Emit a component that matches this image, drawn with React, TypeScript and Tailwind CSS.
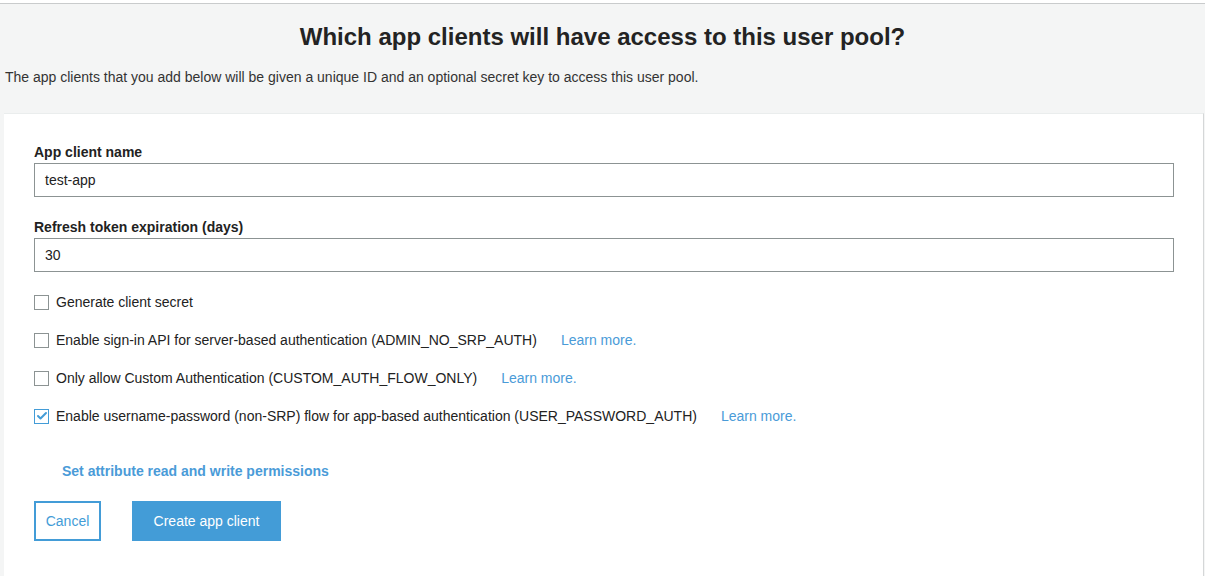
import { Check } from "lucide-react";

const options = [
  { id: 1, label: "Generate client secret", checked: false, learn: false },
  {
    id: 2,
    label: "Enable sign-in API for server-based authentication (ADMIN_NO_SRP_AUTH)",
    checked: false,
    learn: true,
  },
  {
    id: 3,
    label: "Only allow Custom Authentication (CUSTOM_AUTH_FLOW_ONLY)",
    checked: false,
    learn: true,
  },
  {
    id: 4,
    label: "Enable username-password (non-SRP) flow for app-based authentication (USER_PASSWORD_AUTH)",
    checked: true,
    learn: true,
  },
];

export default function App() {
  return (
    <div className="w-[1205px] h-[576px] overflow-hidden bg-[#f4f5f5] font-['Liberation_Sans',Arial,sans-serif] text-[#222]">
      <div className="h-[3px] bg-white" />
      <div className="h-px bg-[#c9cbcc]" />

      {/* Header */}
      <div className="flex flex-col">
        <h1 className="mt-[19px] text-center text-[24px] leading-[28px] font-bold text-[#232323]">
          Which app clients will have access to this user pool?
        </h1>
        <p className="mt-[18px] pl-[5px] text-[14px] leading-[16px] text-[#333]">
          The app clients that you add below will be given a unique ID and an optional secret key to access this user pool.
        </p>
      </div>

      {/* Card */}
      <div className="mt-[28px] ml-[4px] mr-px h-[600px] bg-white border-t border-[#eaeded] border-r border-r-[#d5d7d8] px-[30px] pt-[30px]">
        <div className="flex flex-col">
          <label className="text-[14px] leading-[16px] font-bold text-[#222]">App client name</label>
          <div className="mt-[3px] h-[34px] w-[1140px] border border-[#8c9393] flex items-center px-[10px] text-[14px] text-[#222]">
            test-app
          </div>

          <label className="mt-[22px] text-[14px] leading-[16px] font-bold text-[#222]">
            Refresh token expiration (days)
          </label>
          <div className="mt-[3px] h-[34px] w-[1140px] border border-[#8c9393] flex items-center px-[10px] text-[14px] text-[#222]">
            30
          </div>

          {/* Options */}
          <div className="mt-[22px] flex flex-col gap-[22px]">
            {options.map((o) => (
              <div key={o.id} className="flex items-center h-[16px]">
                <div
                  className={`w-[15px] h-[15px] flex items-center justify-center border ${
                    o.checked ? "border-[#439cd7]" : "border-[#8c9393]"
                  }`}
                >
                  {o.checked && <Check className="w-[12px] h-[12px] text-[#439cd7]" strokeWidth={4} />}
                </div>
                <span className="ml-[7px] text-[14px] text-[#222]">{o.label}</span>
                {o.learn && (
                  <a className="ml-[24px] text-[14px] text-[#4a9bd8] cursor-pointer">Learn more.</a>
                )}
              </div>
            ))}
          </div>

          <a className="mt-[39px] ml-[28px] text-[14px] leading-[16px] font-bold text-[#4a9bd8] cursor-pointer">
            Set attribute read and write permissions
          </a>

          {/* Buttons */}
          <div className="mt-[22px] flex gap-[31px]">
            <button className="w-[67px] h-[40px] border-2 border-[#439cd7] text-[14px] text-[#439cd7] bg-white">
              Cancel
            </button>
            <button className="w-[149px] h-[40px] bg-[#439cd7] text-[14px] text-white">
              Create app client
            </button>
          </div>
        </div>
      </div>
    </div>
  );
}
